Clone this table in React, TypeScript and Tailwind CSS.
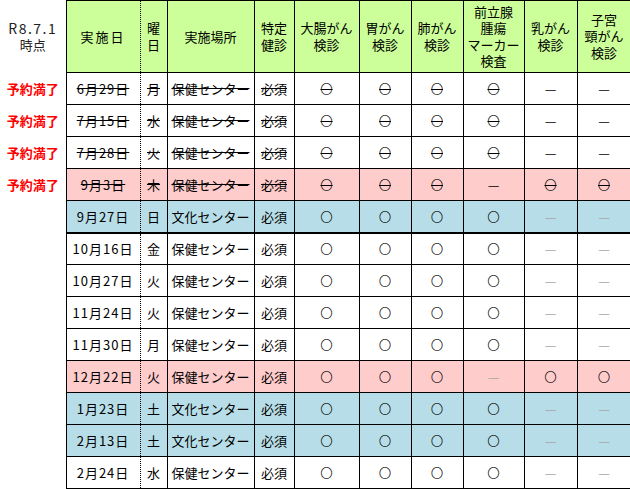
import React from "react";

type V = "o" | "-";
type Row = {
  date: string;
  day: string;
  place: string;
  full?: boolean;
  bg: "white" | "pink" | "blue";
  vals: V[];
  thick?: boolean;
};

const A: V[] = ["o", "o", "o", "o", "-", "-"];
const B: V[] = ["o", "o", "o", "-", "o", "o"];
const H = "保健センター";
const K = "文化センター";

const rows: Row[] = [
  { date: "6月29日", day: "月", place: H, full: true, bg: "white", vals: A },
  { date: "7月15日", day: "水", place: H, full: true, bg: "white", vals: A },
  { date: "7月28日", day: "火", place: H, full: true, bg: "white", vals: A },
  { date: "9月3日", day: "木", place: H, full: true, bg: "pink", vals: B },
  { date: "9月27日", day: "日", place: K, bg: "blue", vals: A, thick: true },
  { date: "10月16日", day: "金", place: H, bg: "white", vals: A },
  { date: "10月27日", day: "火", place: H, bg: "white", vals: A },
  { date: "11月24日", day: "火", place: H, bg: "white", vals: A },
  { date: "11月30日", day: "月", place: H, bg: "white", vals: A },
  { date: "12月22日", day: "火", place: H, bg: "pink", vals: B },
  { date: "1月23日", day: "土", place: K, bg: "blue", vals: A },
  { date: "2月13日", day: "土", place: K, bg: "blue", vals: A },
  { date: "2月24日", day: "水", place: H, bg: "white", vals: A },
];

const bgClass = {
  white: "bg-white",
  pink: "bg-[#ffcccc]",
  blue: "bg-[#b7dee8]",
};

const headers: string[][] = [
  ["大腸がん", "検診"],
  ["胃がん", "検診"],
  ["肺がん", "検診"],
  ["前立腺", "腫瘍", "マーカー", "検査"],
  ["乳がん", "検診"],
  ["子宮", "頸がん", "検診"],
];

function Lines({ lines, cls = "" }: { lines: string[]; cls?: string }) {
  return (
    <div className={`flex flex-col items-center leading-[16.5px] ${cls}`}>
      {lines.map((l, i) => (
        <span key={i}>{l}</span>
      ))}
    </div>
  );
}

export default function App() {
  return (
    <div className="w-[630px] h-[489px] overflow-hidden bg-white text-black font-['Noto_Sans_CJK_JP',sans-serif] text-[13px]">
      <table className="table-fixed border-collapse w-[631px]">
        <colgroup>
          <col className="w-[66px]" />
          <col className="w-[74px]" />
          <col className="w-[27px]" />
          <col className="w-[87px]" />
          <col className="w-[40px]" />
          <col className="w-[65px]" />
          <col className="w-[52px]" />
          <col className="w-[52px]" />
          <col className="w-[61px]" />
          <col className="w-[53px]" />
          <col className="w-[54px]" />
        </colgroup>
        <thead>
          <tr className="h-[72px]">
            <th className="border-0 p-0 font-normal text-[#222] text-center align-middle">
              <div className="flex flex-col items-center leading-[16.5px]">
                <span className="tracking-[1.5px] text-[14px]">R8.7.1</span>
                <span>時点</span>
              </div>
            </th>
            <th className="border border-black [border-right-style:dotted] bg-[#ccff99] p-0 font-normal text-center tracking-[2px]">
              実施日
            </th>
            <th className="border border-black border-l-0 bg-[#ccff99] p-0 font-normal text-center">
              <Lines lines={["曜", "日"]} />
            </th>
            <th className="border border-black bg-[#ccff99] p-0 font-normal text-center">
              実施場所
            </th>
            <th className="border border-black bg-[#ccff99] p-0 font-normal text-center">
              <Lines lines={["特定", "健診"]} />
            </th>
            {headers.map((h, i) => (
              <th
                key={i}
                className="border border-black bg-[#ccff99] p-0 font-normal text-center"
              >
                <Lines lines={h} />
              </th>
            ))}
          </tr>
        </thead>
        <tbody>
          {rows.map((r, i) => {
            const bg = bgClass[r.bg];
            const strike = r.full ? "line-through decoration-black" : "";
            const bb = r.thick ? "border-b-2" : "";
            return (
              <tr key={i} className="h-[32px]">
                <td className="border-0 p-0 text-center font-bold text-[#ff0000]">
                  {r.full ? "予約満了" : ""}
                </td>
                <td
                  className={`border border-black [border-right-style:dotted] ${bb} ${bg} p-0 text-center`}
                >
                  <span className={`tracking-[1px] ${strike}`}>{r.date}</span>
                </td>
                <td className={`border border-black border-l-0 ${bb} ${bg} p-0 text-center`}>
                  <span className={strike}>{r.day}</span>
                </td>
                <td className={`border border-black ${bb} ${bg} p-0 text-center`}>
                  <span className={strike}>{r.place}</span>
                </td>
                <td className={`border border-black ${bb} ${bg} p-0 text-center`}>
                  <span className={strike}>必須</span>
                </td>
                {r.vals.map((v, j) => (
                  <td
                    key={j}
                    className={`border border-black ${bb} ${bg} p-0 text-center`}
                  >
                    {v === "o" ? (
                      <span
                        className={`text-[12px] text-black [-webkit-text-stroke:0.2px_#000] ${strike}`}
                      >
                        ○
                      </span>
                    ) : (
                      <span
                        className={
                          r.full ? "text-black" : "text-[#a6a6a6]"
                        }
                      >
                        —
                      </span>
                    )}
                  </td>
                ))}
              </tr>
            );
          })}
        </tbody>
      </table>
    </div>
  );
}
